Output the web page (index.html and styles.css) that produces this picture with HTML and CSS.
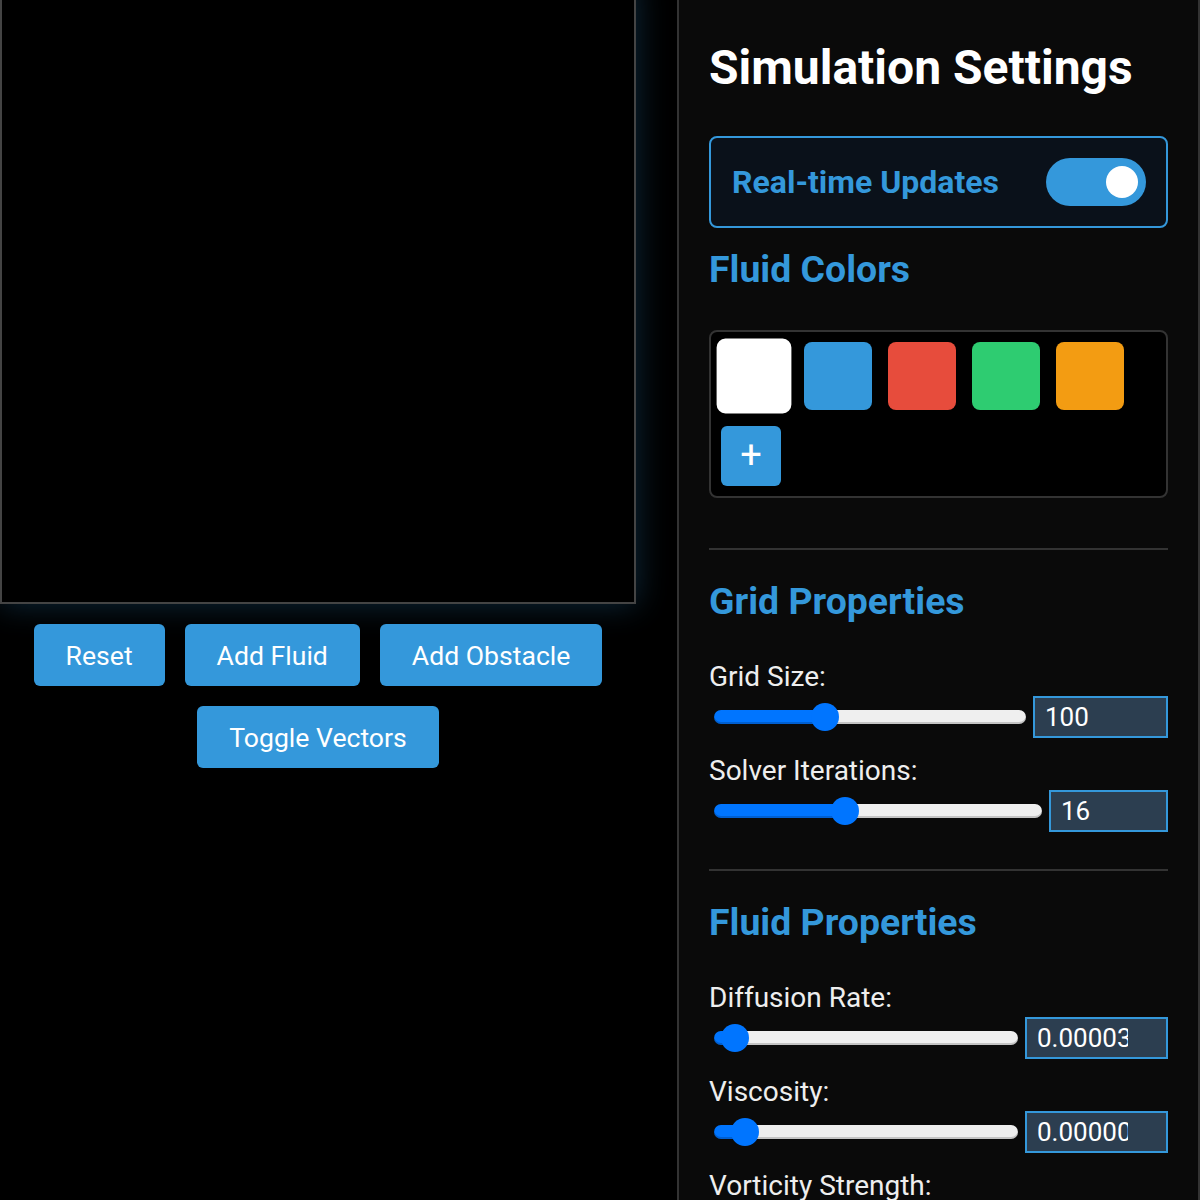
FILE: index.html
```html
<!DOCTYPE html>
<html>
<head>
<meta charset="utf-8">
<title>Fluid Simulation</title>
<link rel="stylesheet" href="styles.css">
</head>
<body>
<div class="app">
  <div class="stage">
    <div class="canvas"></div>
    <div class="actions">
      <button class="btn">Reset</button>
      <button class="btn">Add Fluid</button>
      <button class="btn">Add Obstacle</button>
      <button class="btn">Toggle Vectors</button>
    </div>
  </div>
  <aside class="panel">
    <h2 class="title">Simulation Settings</h2>
    <div class="realtime">
      <span class="realtime-label">Real-time Updates</span>
      <span class="switch"><span class="knob"></span></span>
    </div>
    <h3 class="section-title">Fluid Colors</h3>
    <div class="palette">
      <span class="swatch swatch-white selected"></span>
      <span class="swatch swatch-blue"></span>
      <span class="swatch swatch-red"></span>
      <span class="swatch swatch-green"></span>
      <span class="swatch swatch-orange"></span>
      <button class="add-color">+</button>
    </div>
    <hr class="divider">
    <h3 class="section-title">Grid Properties</h3>
    <div class="param">
      <label class="param-label">Grid Size:</label>
      <div class="param-row">
        <input class="range" type="range" min="0" max="1000" value="340" style="--p:34%">
        <input class="num num-grid" type="text" value="100">
      </div>
    </div>
    <div class="param">
      <label class="param-label">Solver Iterations:</label>
      <div class="param-row">
        <input class="range" type="range" min="0" max="1000" value="390" style="--p:39%">
        <input class="num num-solver" type="text" value="16">
      </div>
    </div>
    <hr class="divider divider-tight">
    <h3 class="section-title">Fluid Properties</h3>
    <div class="param">
      <label class="param-label">Diffusion Rate:</label>
      <div class="param-row">
        <input class="range" type="range" min="0" max="1000" value="25" style="--p:6%">
        <input class="num num-wide" type="text" value="0.00003">
      </div>
    </div>
    <div class="param">
      <label class="param-label">Viscosity:</label>
      <div class="param-row">
        <input class="range" type="range" min="0" max="1000" value="60" style="--p:9%">
        <input class="num num-wide" type="text" value="0.0000001">
      </div>
    </div>
    <div class="param">
      <label class="param-label">Vorticity Strength:</label>
    </div>
  </aside>
</div>
</body>
</html>
```
FILE: styles.css
```css
html, body {
  margin: 0;
  padding: 0;
  background: #000;
  color: #eee;
  font-family: Roboto, "Noto Sans", sans-serif;
  height: 1200px;
  overflow: hidden;
}

.app {
  display: flex;
  gap: 40px;
  align-items: flex-start;
  width: 1200px;
}

.stage {
  width: 637px;
  flex: none;
}

.canvas {
  box-sizing: border-box;
  width: 636px;
  height: 624px;
  margin-top: -20px;
  border: 2px solid #444;
  background: #000;
  box-shadow: 0 0 30px rgba(52, 152, 219, 0.28);
}

.actions {
  display: flex;
  flex-wrap: wrap;
  justify-content: center;
  gap: 20px;
  margin-top: 20px;
  width: 636px;
}

.btn {
  height: 62px;
  padding: 0 32px;
  border: none;
  border-radius: 6px;
  background: #3498db;
  color: #fff;
  font-family: Roboto, sans-serif;
  font-size: 26.6px;
}

.panel {
  box-sizing: border-box;
  width: 523px;
  min-height: 1260px;
  flex: none;
  padding: 40px 30px;
  border-left: 2px solid #333;
  border-right: 2px solid #333;
  background: #0a0a0a;
}

.title {
  margin: 0;
  font-size: 48px;
  line-height: 56px;
  font-weight: 700;
  color: #fff;
}

.realtime {
  box-sizing: border-box;
  height: 92px;
  margin-top: 40px;
  padding: 0 20px 0 21px;
  display: flex;
  align-items: center;
  justify-content: space-between;
  border: 2px solid #3498db;
  border-radius: 8px;
  background: #0a111a;
}

.realtime-label {
  font-size: 32px;
  font-weight: 700;
  color: #3498db;
}

.switch {
  width: 100px;
  height: 48px;
  border-radius: 24px;
  background: #3498db;
  display: flex;
  align-items: center;
  justify-content: flex-end;
  padding-right: 8px;
  box-sizing: border-box;
}

.knob {
  width: 32px;
  height: 32px;
  border-radius: 50%;
  background: #fff;
}

.section-title {
  margin: 20px 0 40px;
  font-size: 37.4px;
  line-height: 42px;
  font-weight: 700;
  color: #3498db;
}

.palette {
  box-sizing: border-box;
  display: flex;
  flex-wrap: wrap;
  gap: 16px;
  padding: 10px 9px;
  border: 2px solid #333;
  border-radius: 8px;
  background: #000;
  height: 168px;
  align-content: flex-start;
}

.swatch {
  width: 68px;
  height: 68px;
  border-radius: 8px;
  box-sizing: border-box;
}

.swatch.selected {
  transform: scale(1.1);
  border: 2px solid #fff;
}

.swatch-white { background: #fff; }
.swatch-blue { background: #3498db; }
.swatch-red { background: #e74c3c; }
.swatch-green { background: #2ecc71; }
.swatch-orange { background: #f39c12; }

.add-color {
  width: 60px;
  height: 60px;
  margin-left: 1px;
  border: none;
  border-radius: 6px;
  background: #3498db;
  color: #fff;
  font-family: Roboto, sans-serif;
  font-size: 38px;
  line-height: 1;
  padding: 0 0 2px;
}

.divider {
  margin: 50px 0 0;
  border: none;
  height: 2px;
  background: #333;
}

.divider-tight {
  margin-top: 37px;
}

.divider + .section-title {
  margin-top: 30px;
  margin-bottom: 40px;
}

.param {
  margin-bottom: 18px;
}

.param-label {
  display: block;
  font-size: 28px;
  line-height: 30px;
  color: #eee;
  margin-bottom: 4px;
}

.param-row {
  display: flex;
  align-items: center;
  gap: 2px;
}

.range {
  -webkit-appearance: none;
  appearance: none;
  flex: 1;
  min-width: 0;
  margin: 0 5px;
  height: 14px;
  border-radius: 7px;
  background: linear-gradient(to right, #0075ff var(--p), #efefef var(--p));
  box-shadow: inset 0 -2px 0 rgba(0, 0, 0, 0.18);
}

.range::-webkit-slider-thumb {
  -webkit-appearance: none;
  appearance: none;
  width: 28px;
  height: 28px;
  border-radius: 50%;
  background: #0075ff;
  border: none;
}

.num {
  box-sizing: border-box;
  height: 42px;
  padding: 0 10px;
  border: 2px solid #3498db;
  background: #2c3e50;
  color: #fff;
  font-family: Roboto, sans-serif;
  font-size: 26px;
  outline: none;
}

.num-grid { width: 135px; }
.num-solver { width: 119px; }
.num-wide { width: 143px; padding-right: 38px; }
```
